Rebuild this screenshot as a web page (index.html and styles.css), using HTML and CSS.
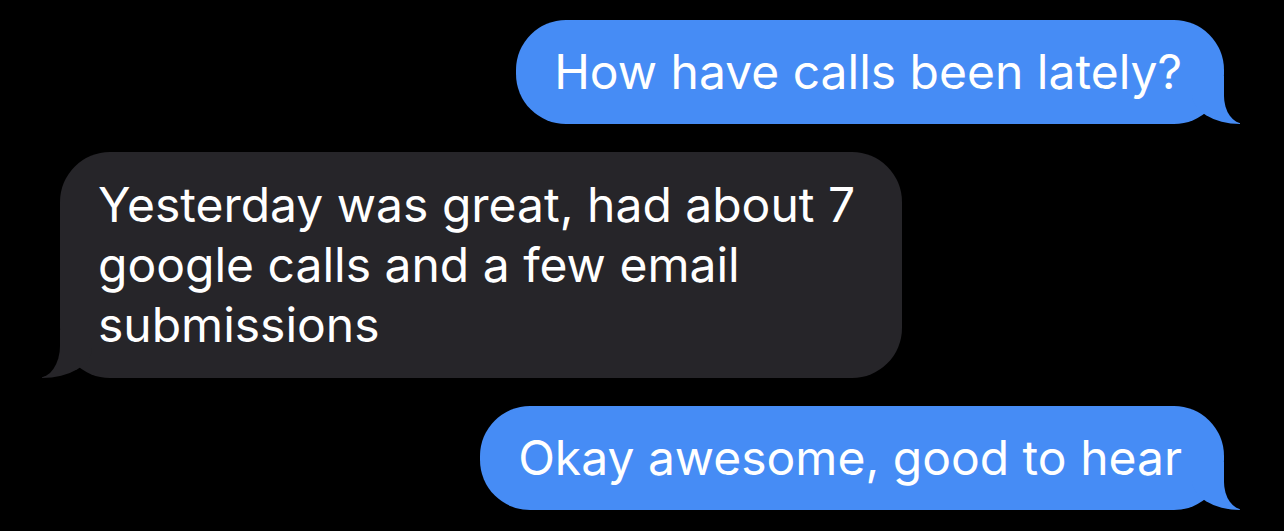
FILE: index.html
```html
<!DOCTYPE html>
<html lang="en">
<head>
    <meta charset="UTF-8">
    <title>Messages</title>
    <link rel="stylesheet" href="styles.css">
</head>
<body>
<div class="thread">
    <div class="msg sent">How have calls been lately?</div>
    <div class="msg received">Yesterday was great, had about 7 google calls and a few email submissions</div>
    <div class="msg sent">Okay awesome, good to hear</div>
</div>
</body>
</html>
```

FILE: styles.css
```css
*{
    margin: 0;
    padding: 0;
    box-sizing: border-box;
}
body{
    background: #000;
    font-family: Inter, "Liberation Sans", sans-serif;
}
.thread{
    display: flex;
    flex-direction: column;
    gap: 28px;
    padding: 20px 60px;
}
.msg{
    position: relative;
    font-size: 48px;
    line-height: 60px;
    color: #fff;
    border-radius: 50px;
    padding: 22px 38px;
}
.sent{
    align-self: flex-end;
    background: #468cf5;
    padding-right: 42px;
}
.received{
    align-self: flex-start;
    background: #262529;
    max-width: 842px;
    padding: 23px 40px 23px 38px;
}

/* tail */
.msg::before,
.msg::after{
    content: "";
    position: absolute;
    bottom: 0;
    height: 48px;
}
.sent::before{
    right: -16px;
    width: 48px;
    background: #468cf5;
    border-bottom-left-radius: 48px 30px;
}
.sent::after{
    right: -60px;
    width: 60px;
    background: #000;
    border-bottom-left-radius: 20px 28px;
}
.received::before{
    left: -18px;
    width: 50px;
    background: #262529;
    border-bottom-right-radius: 50px 30px;
}
.received::after{
    left: -60px;
    width: 60px;
    background: #000;
    border-bottom-right-radius: 22px 32px;
}
```
